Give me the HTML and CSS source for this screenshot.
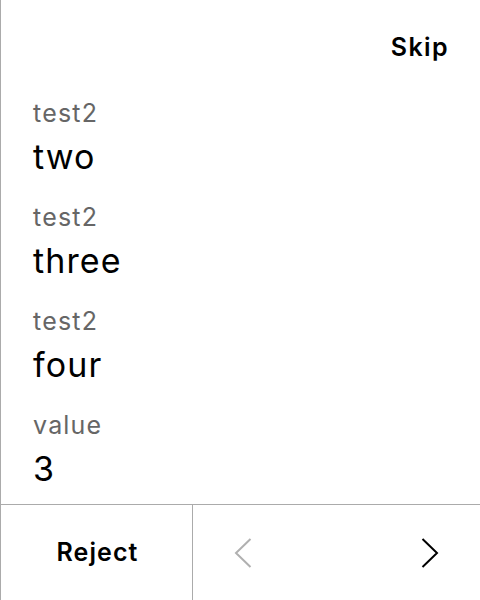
FILE: index.html
```html
<!DOCTYPE html>
<html>
<head>
<meta charset="utf-8">
<link rel="stylesheet" href="styles.css">
</head>
<body>
<div class="screen">
  <header class="top">
    <button class="skip">Skip</button>
  </header>
  <main class="fields">
    <div class="field"><div class="label">test2</div><div class="value">two</div></div>
    <div class="field"><div class="label">test2</div><div class="value">three</div></div>
    <div class="field"><div class="label">test2</div><div class="value">four</div></div>
    <div class="field"><div class="label">value</div><div class="value">3</div></div>
  </main>
  <footer class="bottom">
    <button class="reject">Reject</button>
    <div class="nav">
      <button class="nav-btn prev" aria-label="Previous">
        <svg width="18" height="30" viewBox="0 0 18 30"><path d="M16.5 1 L2 15 L16.5 29" fill="none" stroke="currentColor" stroke-width="2"/></svg>
      </button>
      <button class="nav-btn next" aria-label="Next">
        <svg width="18" height="30" viewBox="0 0 18 30"><path d="M1.5 1 L16 15 L1.5 29" fill="none" stroke="currentColor" stroke-width="2"/></svg>
      </button>
    </div>
  </footer>
</div>
</body>
</html>
```
FILE: styles.css
```css
* { box-sizing: border-box; }
html, body { margin: 0; padding: 0; background: #fff; }
body { font-family: Inter, "Liberation Sans", sans-serif; color: #000; }
.screen {
  width: 480px;
  height: 600px;
  border-left: 1px solid #ababab;
  display: flex;
  flex-direction: column;
}
button {
  font: inherit;
  background: none;
  border: 0;
  padding: 0;
  color: inherit;
  cursor: pointer;
}
.top {
  height: 97px;
  display: flex;
  justify-content: flex-end;
  align-items: center;
  padding-right: 31px;
  padding-bottom: 3px;
}
.skip { font-size: 25px; font-weight: 600; letter-spacing: 1.4px; }
.fields {
  flex: 1;
  padding-left: 32px;
  display: flex;
  flex-direction: column;
  gap: 24px;
}
.label { font-size: 25px; line-height: 32px; color: #666; letter-spacing: 1.2px; }
.value { font-size: 34px; line-height: 40px; margin-top: 8px; letter-spacing: 1.1px; }
.bottom {
  height: 96px;
  border-top: 1px solid #ababab;
  display: flex;
}
.reject {
  width: 192px;
  border-right: 1px solid #ababab;
  font-size: 25px;
  font-weight: 600;
  letter-spacing: 1.1px;
  padding-left: 2px;
  padding-bottom: 2px;
}
.nav { flex: 1; display: flex; justify-content: space-between; }
.nav-btn { width: 100px; display: flex; align-items: center; justify-content: center; }
.prev { color: #b0b0b0; }
.next { color: #000; }
```
